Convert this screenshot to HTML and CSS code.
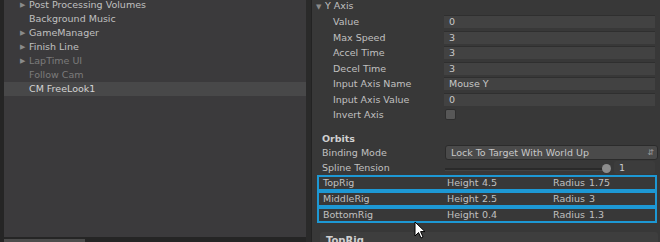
FILE: index.html
```html
<!DOCTYPE html>
<html lang="en">
<head>
    <meta charset="UTF-8">
    <title>CM FreeLook Inspector</title>
    <link rel="stylesheet" href="styles.css">
</head>
<body>
    <div class="hierarchy-wrap">
        <div class="hierarchy">
            <div class="item"><span class="arrow">&#9654;</span>Post Processing Volumes</div>
            <div class="item"><span class="arrow"></span>Background Music</div>
            <div class="item"><span class="arrow">&#9654;</span>GameManager</div>
            <div class="item"><span class="arrow">&#9654;</span>Finish Line</div>
            <div class="item dim"><span class="arrow">&#9654;</span>LapTime UI</div>
            <div class="item dim"><span class="arrow"></span>Follow Cam</div>
            <div class="item selected"><span class="arrow"></span>CM FreeLook1</div>
        </div>
        <div class="hscroll"><div class="thumb"></div></div>
    </div>

    <div class="divider"></div>

    <div class="inspector">
        <div class="foldout"><span class="fold-arrow">&#9660;</span>Y Axis</div>
        <div class="props">
            <div class="prop"><span class="label">Value</span><span class="field">0</span></div>
            <div class="prop"><span class="label">Max Speed</span><span class="field">3</span></div>
            <div class="prop"><span class="label">Accel Time</span><span class="field">3</span></div>
            <div class="prop"><span class="label">Decel Time</span><span class="field">3</span></div>
            <div class="prop"><span class="label">Input Axis Name</span><span class="field">Mouse Y</span></div>
            <div class="prop"><span class="label">Input Axis Value</span><span class="field">0</span></div>
            <div class="prop"><span class="label">Invert Axis</span><span class="checkbox"></span></div>
        </div>

        <div class="section">Orbits</div>
        <div class="prop wide"><span class="label">Binding Mode</span><span class="dropdown">Lock To Target With World Up<span class="updown">&#8693;</span></span></div>
        <div class="prop wide">
            <span class="label">Spline Tension</span>
            <span class="slider"><span class="track"></span><span class="knob"></span></span>
            <span class="num">1</span>
        </div>

        <div class="rigs">
            <div class="rig"><span class="rig-name">TopRig</span><span class="rig-h">Height</span><span class="rig-hv">4.5</span><span class="rig-r">Radius</span><span class="rig-rv">1.75</span></div>
            <div class="rig"><span class="rig-name">MiddleRig</span><span class="rig-h">Height</span><span class="rig-hv">2.5</span><span class="rig-r">Radius</span><span class="rig-rv">3</span></div>
            <div class="rig"><span class="rig-name">BottomRig</span><span class="rig-h">Height</span><span class="rig-hv">0.4</span><span class="rig-r">Radius</span><span class="rig-rv">1.3</span></div>
        </div>

        <div class="subpanel">TopRig</div>

        <svg class="cursor" width="12" height="18" viewBox="0 0 12 18">
            <path d="M1 1 L1 15 L4.5 11.5 L7 17 L9 16 L6.6 10.6 L11 10.6 Z" fill="#fff" stroke="#000" stroke-width="1"/>
        </svg>
    </div>
</body>
</html>
```

FILE: styles.css
```css
body {
    margin: 0;
    width: 660px;
    height: 242px;
    overflow: hidden;
    display: flex;
    background-color: #252525;
    font-family: "DejaVu Sans", sans-serif;
    font-size: 9.5px;
    color: #c0c0c0;
}

.hierarchy-wrap {
    width: 302px;
    margin-left: 4px;
    display: flex;
    flex-direction: column;
}

.hierarchy {
    height: 237px;
    background-color: #3b3a3c;
}

.item {
    height: 14px;
    line-height: 14px;
    display: flex;
    align-items: center;
    white-space: nowrap;
}

.item:first-child {
    margin-top: -2px;
}

.arrow {
    width: 9px;
    margin-left: 16px;
    font-size: 7px;
    color: #8a8a8a;
}

.dim {
    color: #7b7b7b;
}

.selected {
    background-color: #484849;
    color: #d4d4d4;
}

.hscroll {
    height: 5px;
    display: flex;
    align-items: flex-end;
}

.thumb {
    width: 81px;
    height: 3px;
    background-color: #4c4c4c;
}

.divider {
    width: 5px;
    background-color: #2a2a2a;
    border-right: 1px solid #232323;
}

.inspector {
    position: relative;
    flex: 1;
    background-color: #383838;
    padding-left: 4px;
}

.foldout {
    height: 14px;
    line-height: 14px;
    margin-top: -1px;
    white-space: nowrap;
}

.fold-arrow {
    display: inline-block;
    width: 9px;
    font-size: 7px;
    color: #8a8a8a;
}

.props {
    padding-left: 17px;
    margin-top: 1px;
}

.prop {
    height: 15.5px;
    display: flex;
    align-items: center;
    white-space: nowrap;
}

.label {
    width: 111px;
    flex: none;
}

.field {
    width: 206px;
    height: 12px;
    line-height: 12px;
    padding-left: 5px;
    background-color: #424242;
    border-top: 1px solid #2f2f2f;
    color: #c8c8c8;
}

.checkbox {
    width: 9px;
    height: 9px;
    margin-left: 1px;
    border-radius: 2px;
    background-color: #575757;
    border: 1px solid #2e2e2e;
}

.section {
    margin-top: 10px;
    padding-left: 6px;
    height: 12px;
    line-height: 12px;
    font-weight: bold;
    color: #d0d0d0;
}

.wide {
    padding-left: 6px;
}

.wide .label {
    width: 123px;
}

.dropdown {
    position: relative;
    width: 206px;
    height: 13px;
    line-height: 13px;
    padding-left: 5px;
    background-color: #4a4a4a;
    border: 1px solid #2b2b2b;
    border-radius: 3px;
    color: #c8c8c8;
}

.updown {
    position: absolute;
    right: 3px;
    top: 0;
    font-size: 8px;
    color: #9a9a9a;
}

.slider {
    position: relative;
    width: 166px;
    height: 12px;
    flex: none;
}

.track {
    position: absolute;
    left: 0;
    right: 4px;
    top: 6px;
    height: 2px;
    background-color: #2a2a2a;
    border-bottom: 1px solid #444;
}

.knob {
    position: absolute;
    right: 0;
    top: 2px;
    width: 9px;
    height: 9px;
    border-radius: 50%;
    background-color: #8c8c8c;
}

.num {
    width: 36px;
    height: 13px;
    line-height: 13px;
    margin-left: 3px;
    padding-left: 5px;
    background-color: #3c3c3c;
    border-radius: 2px;
    color: #c8c8c8;
}

.rigs {
    margin-left: 1px;
    margin-top: -1px;
    width: 340px;
}

.rig {
    height: 12px;
    border: 2px solid #1d98d4;
    display: flex;
    align-items: center;
    white-space: nowrap;
}

.rig-name {
    width: 124px;
    padding-left: 4px;
}

.rig-h {
    width: 35px;
}

.rig-hv {
    width: 71px;
}

.rig-r {
    width: 36px;
}

.subpanel {
    margin-top: 9px;
    margin-left: 4px;
    width: 332px;
    height: 12px;
    padding-left: 6px;
    padding-top: 3px;
    background-color: #3e3e3e;
    border-radius: 3px;
    font-weight: bold;
    font-size: 10px;
    color: #d0d0d0;
}

.cursor {
    position: absolute;
    left: 102px;
    top: 221px;
}
```
